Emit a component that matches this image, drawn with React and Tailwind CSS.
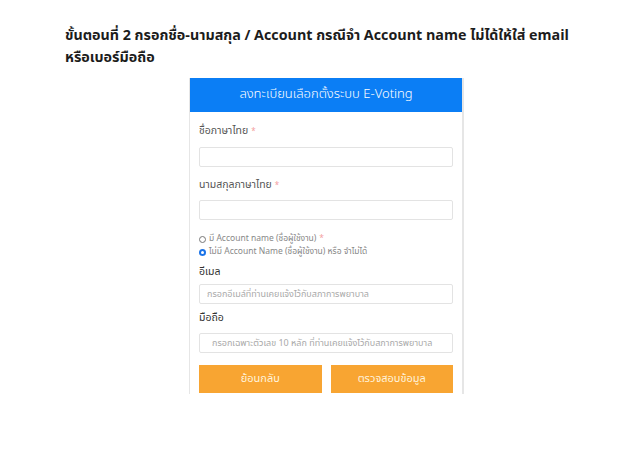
export default function App() {
  const font = { fontFamily: '"Noto Sans Thai", "Noto Sans", "Liberation Sans", sans-serif' }

  function Label({ text, required, className = '' }) {
    return (
      <div className={`h-[14px] text-[10.5px] leading-[14px] text-[#555] ${className}`}>
        {text}
        {required && <span className="ml-[3px] text-[8px] text-[#f4a0a0]">*</span>}
      </div>
    )
  }

  function Field({ placeholder, className = '', pad = 'px-[7px]' }) {
    return (
      <div className={`h-[20px] rounded-[2px] border border-[#e3e3e3] bg-white ${pad} text-[9px] leading-[18px] text-[#a9a9a9] ${className}`}>
        {placeholder}
      </div>
    )
  }

  return (
    <div className="h-[450px] w-[640px] overflow-hidden bg-white" style={font}>
      <div className="pl-[65px] pt-[25px] text-[14.3px] font-bold leading-[22px] text-[#1c1c1c]">
        <p>ขั้นตอนที่ 2 กรอกชื่อ-นามสกุล / Account กรณีจำ Account name ไม่ได้ให้ใส่ email</p>
        <p>หรือเบอร์มือถือ</p>
      </div>

      <div className="ml-[189px] mt-[9px] h-[316px] w-[275px] overflow-hidden border-r-2 border-l border-[#e6e6e6] bg-white">
        <div className="flex h-[34px] items-center justify-center bg-[#0b7ef5] text-[13px] font-light text-white">
          ลงทะเบียนเลือกตั้งระบบ E-Voting
        </div>

        <div className="px-[9px] pt-[12px]">
          <Label text="ชื่อภาษาไทย" required />
          <Field className="mt-[9px]" />

          <Label text="นามสกุลภาษาไทย" required className="mt-[11px]" />
          <Field className="mt-[8px]" />

          <div className="mt-[13px] flex h-[13px] items-center gap-[3px] text-[8.5px] text-[#888]">
            <span className="h-[7px] w-[7px] rounded-full border border-[#777] bg-white" />
            <span>มี Account name (ชื่อผู้ใช้งาน)</span>
            <span className="text-[#f4a0a0]">*</span>
          </div>
          <div className="flex h-[13px] items-center gap-[3px] text-[8.5px] text-[#888]">
            <span className="flex h-[7px] w-[7px] items-center justify-center rounded-full bg-[#1a73e8]">
              <span className="h-[3px] w-[3px] rounded-full bg-white" />
            </span>
            <span>ไม่มี Account Name (ชื่อผู้ใช้งาน) หรือ จำไม่ได้</span>
          </div>

          <Label text="อีเมล" className="mt-[6px] !text-[#333]" />
          <Field className="mt-[5px]" placeholder="กรอกอีเมล์ที่ท่านเคยแจ้งไว้กับสภาการพยาบาล" />

          <Label text="มือถือ" className="mt-[7px] !text-[#333]" />
          <Field className="mt-[8px]" pad="px-[12px]" placeholder="กรอกเฉพาะตัวเลข 10 หลัก ที่ท่านเคยแจ้งไว้กับสภาการพยาบาล" />

          <div className="mt-[12px] flex gap-[9px]">
            <button className="h-[28px] flex-1 bg-[#f8a532] text-[11px] text-[#fff3dc]">ย้อนกลับ</button>
            <button className="h-[28px] flex-1 bg-[#f8a532] text-[11px] text-[#fff3dc]">ตรวจสอบข้อมูล</button>
          </div>
        </div>
      </div>
    </div>
  )
}
